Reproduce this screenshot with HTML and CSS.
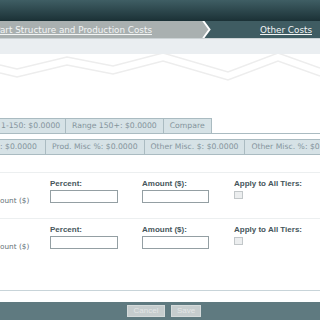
FILE: index.html
```html
<!DOCTYPE html>
<html>
<head>
<meta charset="utf-8">
<link rel="stylesheet" href="styles.css">
</head>
<body>
<div class="page">
  <div class="header"></div>
  <div class="nav">
    <div class="nav-left"><a class="nav-link cut">Part Structure and Production Costs</a></div>
    <svg class="chev" width="10" height="17" viewBox="0 0 10 17"><polygon points="0,0 7,8.5 0,17" fill="#a9b0b0"/><polyline points="0.5,-1 7.5,8.5 0.5,18" fill="none" stroke="#ffffff" stroke-width="2"/></svg>
    <div class="nav-right"><a class="nav-link">Other Costs</a></div>
  </div>
  <div class="subbar"></div>
  <div class="zigzag">
    <svg width="320" height="64" viewBox="0 0 320 64">
      <polyline points="0,11 17,15 67,3 113,12 163,-1 228,18 278,-1 320,14" fill="none" stroke="#ededed" stroke-width="1.5"/>
      <polyline points="0,19 17,23 67,11 113,20 163,7 228,26 278,7 320,22" fill="none" stroke="#ededed" stroke-width="1.5"/>
    </svg>
  </div>
  <div class="tabs">
    <div class="tab first">1-150: $0.0000</div>
    <div class="tab">Range 150+: $0.0000</div>
    <div class="tab">Compare</div>
  </div>
  <div class="costs">
    <div class="cell first">: $0.0000</div>
    <div class="cell">Prod. Misc %: $0.0000</div>
    <div class="cell">Other Misc. $: $0.0000</div>
    <div class="cell">Other Misc. %: $0.0000</div>
  </div>
  <div class="form">
    <div class="frow">
      <div class="side">ount ($)</div>
      <div class="lbl c2">Percent:</div>
      <div class="lbl c3">Amount ($):</div>
      <div class="lbl c4">Apply to All Tiers:</div>
      <div class="inp p"></div>
      <div class="inp a"></div>
      <div class="chk"></div>
    </div>
    <div class="frow">
      <div class="side">ount ($)</div>
      <div class="lbl c2">Percent:</div>
      <div class="lbl c3">Amount ($):</div>
      <div class="lbl c4">Apply to All Tiers:</div>
      <div class="inp p"></div>
      <div class="inp a"></div>
      <div class="chk"></div>
    </div>
  </div>
  <div class="bottomline"></div>
  <div class="footer">
    <button class="btn cancel">Cancel</button>
    <button class="btn save">Save</button>
  </div>
</div>
</body>
</html>
```
FILE: styles.css
```css
html, body { margin: 0; padding: 0; background: #ffffff; }
.page { width: 320px; height: 320px; overflow: hidden; display: flex; flex-direction: column; font-family: "DejaVu Sans", Verdana, sans-serif; }
.header { height: 21px; flex: none; background: linear-gradient(#3f5e64, #1b3136); }
.nav { height: 17px; flex: none; display: flex; background: #3f5c62; }
.nav-left { width: 202px; background: #a9b0b0; display: flex; align-items: center; overflow: hidden; }
.chev { flex: none; display: block; }
.nav-right { flex: 1; display: flex; align-items: center; justify-content: flex-end; padding-right: 8px; }
.nav-link { color: #f3f5f5; font-size: 8.8px; text-decoration: underline; white-space: nowrap; }
.cut { margin-left: -5px; }
.subbar { height: 15px; flex: none; border-top: 1px solid #ccd3d5; background: #eaeef1; }
.zigzag { height: 64px; flex: none; }
.zigzag svg { display: block; }
.tabs { height: 15px; flex: none; display: flex; border-bottom: 1px solid #aabbc1; }
.tab { height: 14px; border: 1px solid #aabbc1; border-bottom: none; margin-left: -1px; background: #d6e2e6; color: #84949c; font-size: 7.7px; line-height: 14px; padding: 0 6px; white-space: nowrap; }
.tab.first { padding-left: 1px; width: 58px; }
.costs { margin-top: 5px; height: 14px; flex: none; display: flex; border-top: 1px solid #aabbc1; border-bottom: 1px solid #aabbc1; background: #d6e2e6; }
.cell { border-right: 1px solid #aabbc1; color: #84949c; font-size: 7.7px; line-height: 14px; padding: 0 6px; white-space: nowrap; flex: none; }
.cell.first { padding-left: 0; width: 39px; }
.form { margin-top: 17px; flex: none; }
.frow { border-top: 1px solid #eceff0; display: grid; grid-template-columns: 50px 92px 92px 1fr; grid-template-rows: 10px 13px; row-gap: 1px; padding-top: 6px; box-sizing: border-box; height: 46px; }
.side { grid-row: 2; grid-column: 1; font-size: 7.3px; color: #66737a; align-self: end; line-height: 10px; margin-bottom: -3px; }
.lbl { grid-row: 1; font-family: "Liberation Sans", Arial, sans-serif; font-weight: bold; font-size: 8px; line-height: 10px; color: #46565b; white-space: nowrap; }
.c2 { grid-column: 2; }
.c3 { grid-column: 3; }
.c4 { grid-column: 4; }
.inp { grid-row: 2; height: 13px; box-sizing: border-box; border: 1px solid #949fa3; background: #fff; }
.inp.p { grid-column: 2; width: 68px; }
.inp.a { grid-column: 3; width: 67px; }
.chk { grid-row: 2; grid-column: 4; width: 9px; height: 8px; box-sizing: border-box; border: 1px solid #c2c7c9; background: #eceeef; margin-top: 1px; }
.bottomline { margin-top: 26px; height: 1px; flex: none; background: #c8d4d9; }
.footer { margin-top: 11px; height: 18px; flex: none; background: #5f7a80; display: flex; align-items: center; gap: 6px; padding-left: 127px; }
.btn { height: 12px; margin: 0; padding: 0; border: 1px solid #d5dbdb; background: #c6cdce; color: #e3e6e6; font-family: "Liberation Sans", Arial, sans-serif; font-size: 8px; line-height: 10px; }
.btn.cancel { width: 38px; }
.btn.save { width: 30px; }
```
